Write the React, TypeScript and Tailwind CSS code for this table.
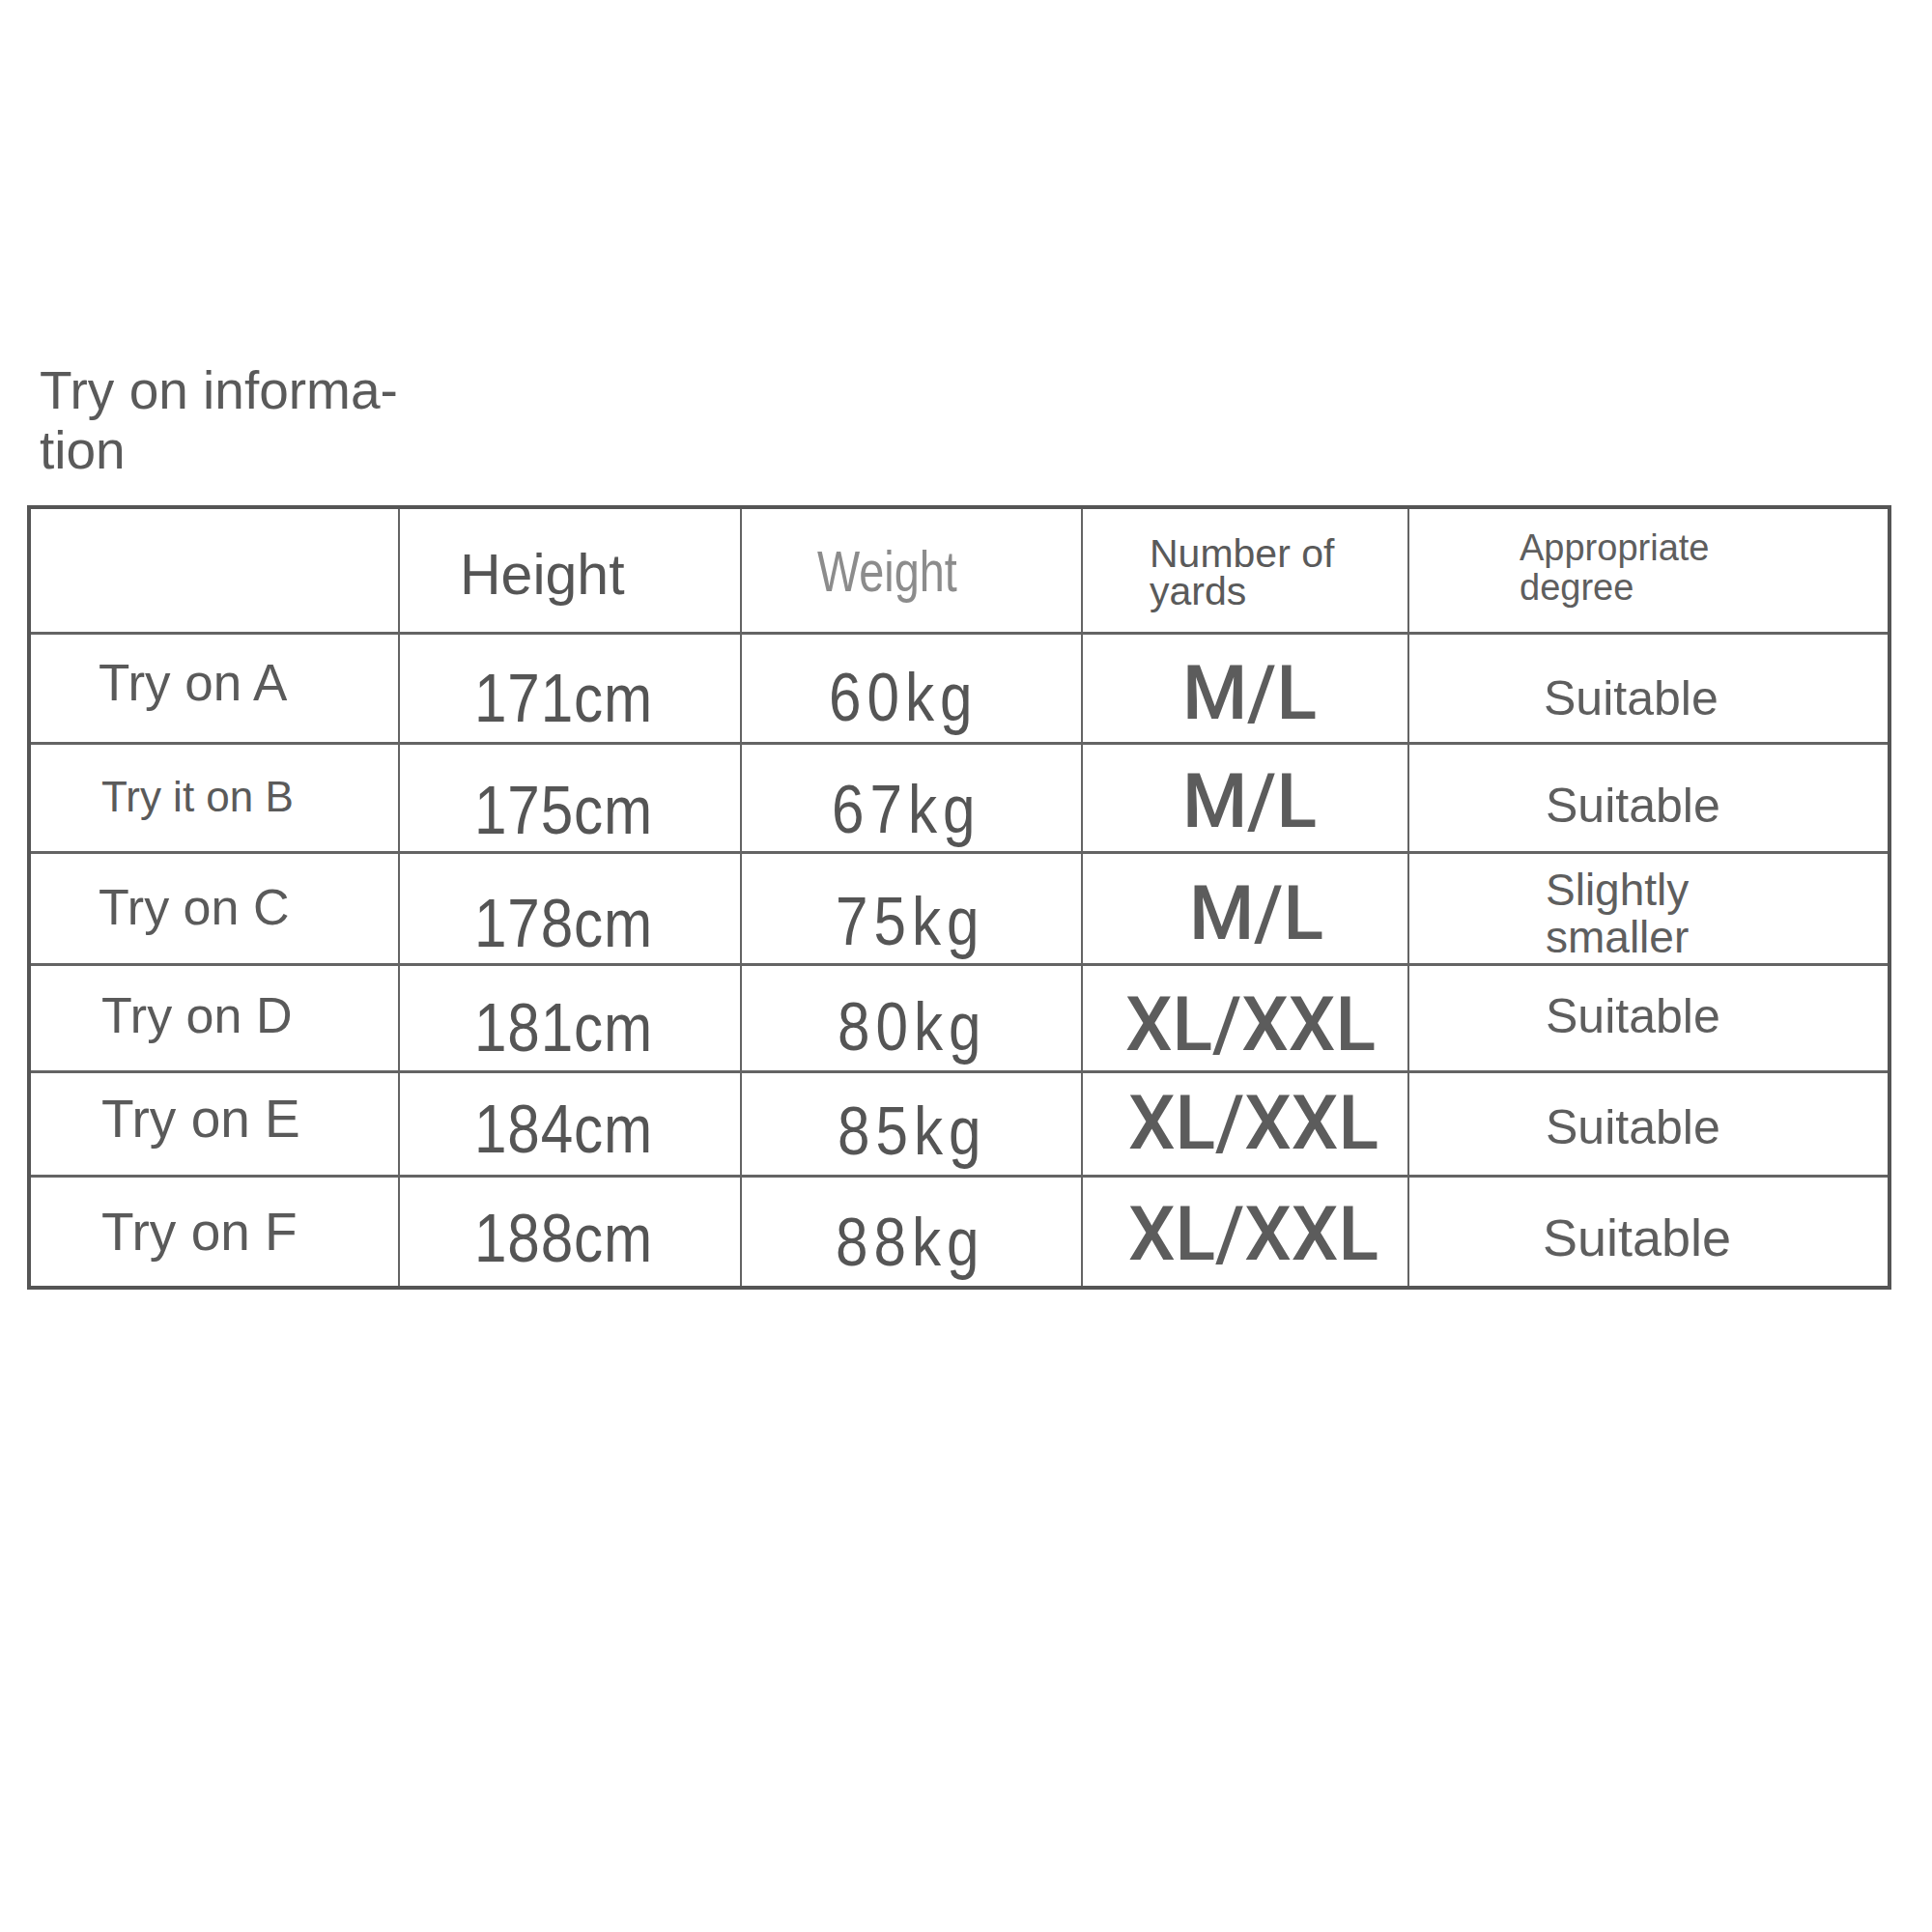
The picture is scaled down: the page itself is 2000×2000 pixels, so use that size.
import React from "react";

type Row = {
  h: string;
  label: string;
  labelCls: string;
  height: string;
  heightCls: string;
  weight: string;
  weightCls: string;
  size: string;
  sizeCls: string;
  fit: string[];
  fitCls: string;
  last?: boolean;
};

const rows: Row[] = [
  {
    h: "h-[114px]",
    label: "Try on A",
    labelCls: "pl-[70px] pt-[23px] text-[53px]",
    height: "171cm",
    heightCls: "pt-[31px]",
    weight: "60kg",
    weightCls: "pl-[90px] pt-[30px]",
    size: "M/L",
    sizeCls: "pl-[103px] pt-[23px]",
    fit: ["Suitable"],
    fitCls: "pl-[139px] pt-[41px] text-[50px] leading-none",
  },
  {
    h: "h-[113px]",
    label: "Try it on B",
    labelCls: "pl-[73px] pt-[32px] text-[44px]",
    height: "175cm",
    heightCls: "pt-[33px]",
    weight: "67kg",
    weightCls: "pl-[93px] pt-[32px]",
    size: "M/L",
    sizeCls: "pl-[103px] pt-[21px]",
    fit: ["Suitable"],
    fitCls: "pl-[141px] pt-[38px] text-[50px] leading-none",
  },
  {
    h: "h-[116px]",
    label: "Try on C",
    labelCls: "pl-[70px] pt-[29px] text-[52px]",
    height: "178cm",
    heightCls: "pt-[37px]",
    weight: "75kg",
    weightCls: "pl-[97px] pt-[35px]",
    size: "M/L",
    sizeCls: "pl-[110px] pt-[24px]",
    fit: ["Slightly", "smaller"],
    fitCls: "pl-[141px] pt-[13px] text-[46px] leading-[49px]",
  },
  {
    h: "h-[111px]",
    label: "Try on D",
    labelCls: "pl-[73px] pt-[25px] text-[52px]",
    height: "181cm",
    heightCls: "pt-[29px]",
    weight: "80kg",
    weightCls: "pl-[99px] pt-[28px]",
    size: "XL/XXL",
    sizeCls: "pl-[44px] pt-[23px]",
    fit: ["Suitable"],
    fitCls: "pl-[141px] pt-[27px] text-[50px] leading-none",
  },
  {
    h: "h-[108px]",
    label: "Try on E",
    labelCls: "pl-[73px] pt-[20px] text-[55px]",
    height: "184cm",
    heightCls: "pt-[23px]",
    weight: "85kg",
    weightCls: "pl-[99px] pt-[25px]",
    size: "XL/XXL",
    sizeCls: "pl-[47px] pt-[14px]",
    fit: ["Suitable"],
    fitCls: "pl-[141px] pt-[31px] text-[50px] leading-none",
  },
  {
    h: "h-[112px]",
    label: "Try on F",
    labelCls: "pl-[73px] pt-[29px] text-[55px]",
    height: "188cm",
    heightCls: "pt-[28px]",
    weight: "88kg",
    weightCls: "pl-[97px] pt-[32px]",
    size: "XL/XXL",
    sizeCls: "pl-[47px] pt-[21px]",
    fit: ["Suitable"],
    fitCls: "pl-[138px] pt-[35px] text-[54px] leading-none",
    last: true,
  },
];

const sans = "font-['Liberation_Sans',Arial,sans-serif]";
const medium = "font-['Roboto','Liberation_Sans',sans-serif] font-medium";

export default function App() {
  return (
    <div className={`min-h-[2000px] w-[2000px] bg-white pt-[373px] text-[#585858] ${sans}`}>
      <h1 className="ml-[41px] text-[55px] font-normal leading-[62px] text-[#5a5a5a]">
        Try on informa-
        <br />
        tion
      </h1>

      <div className="ml-[28px] mt-[26px] w-[1930px] border-4 border-[#555555]">
        {/* header */}
        <div className="flex h-[130px] border-b-[3px] border-[#646464]">
          <div className="w-[382px] border-r-2 border-[#646464]" />
          <div className="w-[354px] border-r-2 border-[#646464] pl-[62px] pt-[39px] text-[59px] leading-none text-[#555555]">
            Height
          </div>
          <div className="w-[353px] border-r-2 border-[#646464] pl-[78px] pt-[35px] text-[60px] leading-none text-[#8c8c8c]">
            <span className="inline-block origin-left scale-x-[0.78]">Weight</span>
          </div>
          <div className="w-[338px] border-r-2 border-[#646464] pl-[69px] pt-[27px] text-[41px] leading-[39px] text-[#5a5a5a]">
            Number of
            <br />
            yards
          </div>
          <div className="w-[495px] pl-[114px] pt-[20px] text-[38px] leading-[41px] text-[#5e5e5e]">
            Appropriate
            <br />
            degree
          </div>
        </div>

        {rows.map((r) => (
          <div
            key={r.label}
            className={`flex ${r.h} ${r.last ? "" : "border-b-[3px] border-[#646464]"}`}
          >
            <div className={`w-[382px] border-r-2 border-[#646464] leading-none text-[#5a5a5a] ${r.labelCls}`}>
              {r.label}
            </div>
            <div className={`w-[354px] border-r-2 border-[#646464] pl-[77px] text-[70px] leading-none text-[#555555] ${r.heightCls}`}>
              <span className="inline-block origin-left scale-x-[0.86] tracking-[1px]">{r.height}</span>
            </div>
            <div className={`w-[353px] border-r-2 border-[#646464] text-[70px] leading-none text-[#555555] ${r.weightCls}`}>
              <span className="inline-block origin-left scale-x-[0.86] tracking-[7px]">{r.weight}</span>
            </div>
            <div className={`w-[338px] border-r-2 border-[#646464] text-[77px] leading-none text-[#5c5c5c] ${medium} ${r.sizeCls}`}>
              {r.size}
            </div>
            <div className={`w-[495px] text-[#5e5e5e] ${r.fitCls}`}>
              {r.fit.map((t) => (
                <div key={t}>{t}</div>
              ))}
            </div>
          </div>
        ))}
      </div>
    </div>
  );
}
